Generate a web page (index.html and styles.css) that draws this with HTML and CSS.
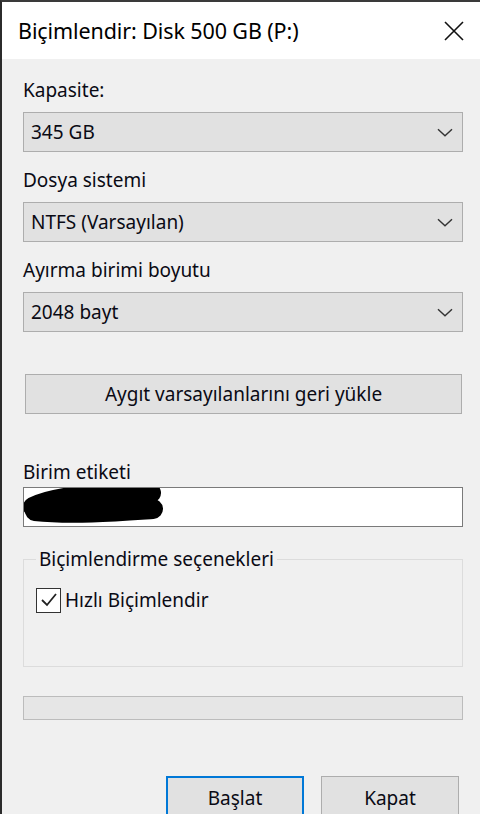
FILE: index.html
```html
<!DOCTYPE html>
<html lang="tr">
<head>
<meta charset="utf-8">
<title>Biçimlendir</title>
<link rel="stylesheet" href="styles.css">
</head>
<body>
<div class="window">
  <div class="titlebar">
    <span class="title">Biçimlendir: Disk 500 GB (P:)</span>
    <svg class="close" width="20" height="20" viewBox="0 0 20 20"><path d="M1 1 L19 19 M19 1 L1 19" stroke="#111" stroke-width="1.6" fill="none"/></svg>
  </div>
  <div class="content">
    <div class="label first">Kapasite:</div>
    <div class="combo"><span>345 GB</span><svg class="chev" width="16" height="9" viewBox="0 0 16 9"><path d="M1 1.2 L8 7.8 L15 1.2" stroke="#333" stroke-width="1.4" fill="none"/></svg></div>
    <div class="label">Dosya sistemi</div>
    <div class="combo"><span>NTFS (Varsayılan)</span><svg class="chev" width="16" height="9" viewBox="0 0 16 9"><path d="M1 1.2 L8 7.8 L15 1.2" stroke="#333" stroke-width="1.4" fill="none"/></svg></div>
    <div class="label">Ayırma birimi boyutu</div>
    <div class="combo"><span>2048 bayt</span><svg class="chev" width="16" height="9" viewBox="0 0 16 9"><path d="M1 1.2 L8 7.8 L15 1.2" stroke="#333" stroke-width="1.4" fill="none"/></svg></div>
    <div class="wide-btn">Aygıt varsayılanlarını geri yükle</div>
    <div class="label label-tag">Birim etiketi</div>
    <div class="textbox">
      <svg class="scribble" width="145" height="44" viewBox="0 0 145 44"><path d="M10 24 C30 14, 70 10, 105 12 C118 12, 125 8, 128 10" stroke="#000" stroke-width="20" stroke-linecap="round" fill="none"/><path d="M12 28 C50 32, 100 28, 130 26" stroke="#000" stroke-width="20" stroke-linecap="round" fill="none"/></svg>
    </div>
    <fieldset class="group">
      <legend>Biçimlendirme seçenekleri</legend>
      <div class="check-row">
        <span class="checkbox"><svg width="18" height="16" viewBox="0 0 18 16"><path d="M2 8 L7 13 L16 2" stroke="#222" stroke-width="1.8" fill="none"/></svg></span>
        <span>Hızlı Biçimlendir</span>
      </div>
    </fieldset>
    <div class="progress"></div>
    <div class="actions">
      <div class="btn primary">Başlat</div>
      <div class="btn">Kapat</div>
    </div>
  </div>
</div>
</body>
</html>
```
FILE: styles.css
```css
html, body {
  margin: 0;
  padding: 0;
  background: #f0f0f0;
  overflow: hidden;
}
body {
  font-family: "Noto Sans", "Open Sans", sans-serif;
  color: #0a0a14;
}
.window {
  width: 480px;
  height: 814px;
  box-sizing: border-box;
  border-left: 2px solid #2b2b2b;
  border-top: 2px solid #3a3a3a;
  background: #f0f0f0;
  display: flex;
  flex-direction: column;
}
.titlebar {
  height: 57px;
  background: #fff;
  display: flex;
  align-items: center;
  justify-content: space-between;
  padding: 0 16px 0 16px;
  flex: none;
}
.title {
  font-size: 21.5px;
  color: #000;
  letter-spacing: -0.1px;
}
.content {
  padding: 0 17px 0 21px;
  display: flex;
  flex-direction: column;
}
.label {
  font-size: 19px;
  line-height: 24px;
  height: 24px;
  margin-top: 16px;
  margin-bottom: 10px;
}
.label.first {
  margin-top: 19px;
}
.combo {
  height: 40px;
  box-sizing: border-box;
  border: 1.5px solid #adadad;
  background: #e1e1e1;
  display: flex;
  align-items: center;
  justify-content: space-between;
  padding: 0 9px 0 7px;
  font-size: 19px;
}
.wide-btn {
  margin: 42px 1px 0 2px;
  height: 40px;
  box-sizing: border-box;
  border: 1.5px solid #adadad;
  background: #e1e1e1;
  display: flex;
  align-items: center;
  justify-content: center;
  font-size: 19px;
}
.label-tag {
  margin-top: 46px;
  margin-bottom: 0;
  height: 27px;
}
.textbox {
  height: 40px;
  box-sizing: border-box;
  border: 1.5px solid #7a7a7a;
  background: #fff;
  position: relative;
  overflow: hidden;
}
.scribble {
  position: absolute;
  left: -1px;
  top: -5px;
}
.group {
  margin: 20px 0 0 0;
  padding: 6px 0 0 12px;
  height: 120px;
  box-sizing: border-box;
  border: 1.5px solid #dcdcdc;
  font-size: 19px;
}
.group legend {
  padding: 0 3px;
  line-height: 24px;
}
.check-row {
  display: flex;
  align-items: center;
  gap: 4px;
  margin-top: 10px;
}
.checkbox {
  width: 25px;
  height: 25px;
  box-sizing: border-box;
  border: 1.5px solid #333;
  background: #fff;
  display: flex;
  align-items: center;
  justify-content: center;
}
.progress {
  margin-top: 29px;
  height: 24px;
  box-sizing: border-box;
  border: 1.5px solid #bcbcbc;
  background: #e6e6e6;
}
.actions {
  margin-top: 56px;
  display: flex;
  justify-content: flex-end;
  gap: 17px;
  padding-right: 4px;
}
.btn {
  width: 138px;
  height: 40px;
  box-sizing: border-box;
  border: 1.5px solid #adadad;
  background: #e1e1e1;
  display: flex;
  align-items: center;
  justify-content: center;
  font-size: 19px;
  padding-top: 4px;
}
.btn.primary {
  border: 2px solid #0078d7;
}
```
